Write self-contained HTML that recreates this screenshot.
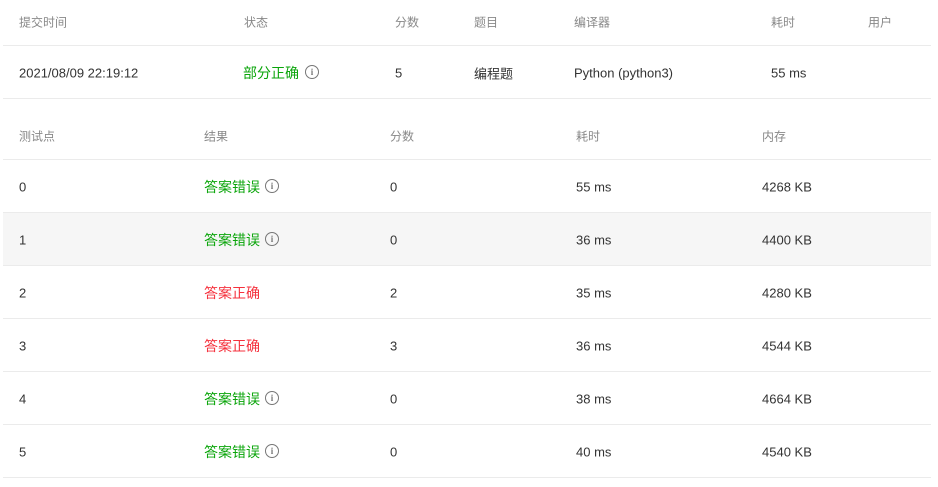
<!DOCTYPE html>
<html><head><meta charset="utf-8"><style>
body{margin:0;width:938px;height:487px;background:#fff;font-family:"Liberation Sans","Noto Sans CJK SC",sans-serif;position:relative;overflow:hidden}
.t{position:absolute;white-space:nowrap;transform:translateY(-50%);font-size:13px;color:#333}
.h{font-size:12px;color:#888}
.g{color:#0aa50a;font-size:14px}.r{color:#f5313d;font-size:14px}
.line{position:absolute;left:3px;width:928px;height:1px;background:#ebebeb}
.bg{position:absolute;left:3px;width:928px;height:53px;background:#f6f6f6}
.ic{position:absolute;width:12px;height:12px;border:1.2px solid #777;border-radius:50%;transform:translateY(-50%);color:#777;font:bold 9px/12px "Liberation Serif",serif;text-align:center}
</style></head><body>
<div class="bg" style="top:213px"></div>
<div class="line" style="top:45px"></div>
<div class="line" style="top:98px"></div>
<div class="line" style="top:159px"></div>
<div class="line" style="top:212px"></div>
<div class="line" style="top:265px"></div>
<div class="line" style="top:318px"></div>
<div class="line" style="top:371px"></div>
<div class="line" style="top:424px"></div>
<div class="line" style="top:477px"></div>

<div class="t h" style="left:19px;top:22px">提交时间</div>
<div class="t h" style="left:244px;top:22px">状态</div>
<div class="t h" style="left:395px;top:22px">分数</div>
<div class="t h" style="left:474px;top:22px">题目</div>
<div class="t h" style="left:574px;top:22px">编译器</div>
<div class="t h" style="left:771px;top:22px">耗时</div>
<div class="t h" style="left:868px;top:22px">用户</div>

<div class="t" style="left:19px;top:73px">2021/08/09 22:19:12</div>
<div class="t g" style="left:243px;top:73px">部分正确</div>
<div class="ic" style="left:305px;top:72px">i</div>
<div class="t" style="left:395px;top:73px">5</div>
<div class="t" style="left:474px;top:73px">编程题</div>
<div class="t" style="left:574px;top:73px">Python (python3)</div>
<div class="t" style="left:771px;top:73px">55 ms</div>

<div class="t h" style="left:19px;top:136px">测试点</div>
<div class="t h" style="left:204px;top:136px">结果</div>
<div class="t h" style="left:390px;top:136px">分数</div>
<div class="t h" style="left:576px;top:136px">耗时</div>
<div class="t h" style="left:762px;top:136px">内存</div>

<div class="t" style="left:19px;top:187px">0</div><div class="t g" style="left:204px;top:187px">答案错误</div><div class="ic" style="left:265px;top:186px">i</div><div class="t" style="left:390px;top:187px">0</div><div class="t" style="left:576px;top:187px">55 ms</div><div class="t" style="left:762px;top:187px">4268 KB</div>
<div class="t" style="left:19px;top:240px">1</div><div class="t g" style="left:204px;top:240px">答案错误</div><div class="ic" style="left:265px;top:239px">i</div><div class="t" style="left:390px;top:240px">0</div><div class="t" style="left:576px;top:240px">36 ms</div><div class="t" style="left:762px;top:240px">4400 KB</div>
<div class="t" style="left:19px;top:293px">2</div><div class="t r" style="left:204px;top:293px">答案正确</div><div class="t" style="left:390px;top:293px">2</div><div class="t" style="left:576px;top:293px">35 ms</div><div class="t" style="left:762px;top:293px">4280 KB</div>
<div class="t" style="left:19px;top:346px">3</div><div class="t r" style="left:204px;top:346px">答案正确</div><div class="t" style="left:390px;top:346px">3</div><div class="t" style="left:576px;top:346px">36 ms</div><div class="t" style="left:762px;top:346px">4544 KB</div>
<div class="t" style="left:19px;top:399px">4</div><div class="t g" style="left:204px;top:399px">答案错误</div><div class="ic" style="left:265px;top:398px">i</div><div class="t" style="left:390px;top:399px">0</div><div class="t" style="left:576px;top:399px">38 ms</div><div class="t" style="left:762px;top:399px">4664 KB</div>
<div class="t" style="left:19px;top:452px">5</div><div class="t g" style="left:204px;top:452px">答案错误</div><div class="ic" style="left:265px;top:451px">i</div><div class="t" style="left:390px;top:452px">0</div><div class="t" style="left:576px;top:452px">40 ms</div><div class="t" style="left:762px;top:452px">4540 KB</div>
</body></html>
